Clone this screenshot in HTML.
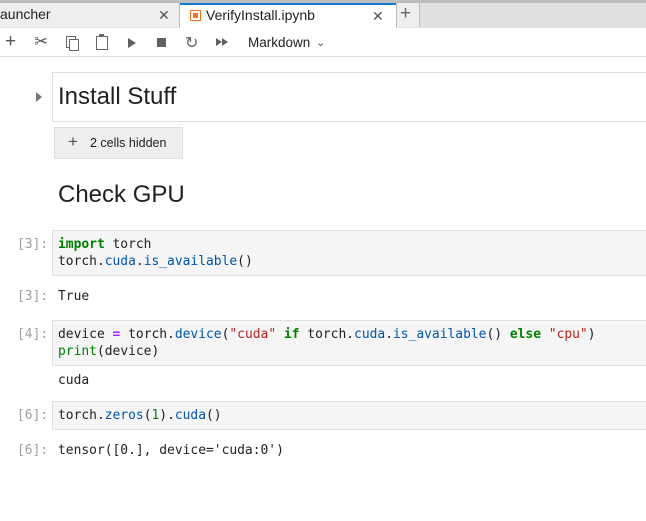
<!DOCTYPE html>
<html><head><style>
body{margin:0;width:646px;height:521px;overflow:hidden;background:#fff;font-family:"Liberation Sans",sans-serif;position:relative}
.a{position:absolute}
.mono{font-family:"DejaVu Sans Mono",monospace;font-size:12.95px;line-height:17px;color:#212121;white-space:pre}
.pr{color:#9e9e9e;left:17px}
.cell{left:52px;width:594px;background:#f5f5f5;border:1px solid #e0e0e0;border-right:none;box-sizing:border-box}
.k{color:#008000;font-weight:bold}.b{color:#0055aa}.s{color:#ba2121}.n{color:#008000}.o{color:#aa22ff;font-weight:bold}
</style></head><body>
<div class="a" style="left:0;top:0;width:646px;height:3px;background:#bdbdbd"></div>
<div class="a" style="left:0;top:3px;width:646px;height:25px;background:#e0e0e0"></div>
<div class="a" style="left:0;top:3px;width:179px;height:24px;background:#eeeeee;border-right:1px solid #bdbdbd"></div>
<div class="a" style="left:0;top:6px;font-size:14px;color:#212121">auncher</div>
<div class="a" style="left:158px;top:7px;font-size:14px;color:#555">✕</div>
<div class="a" style="left:180px;top:3px;width:216px;height:25px;background:#fff;border-top:2px solid #1976d2;box-sizing:border-box"></div>
<div class="a" style="left:190px;top:10px;width:9px;height:9px;border:1px solid #f37626;background:#fff"><div style="margin:2px;width:5px;height:5px;background:#f37626"></div></div>
<div class="a" style="left:206px;top:7px;font-size:14px;color:#212121">VerifyInstall.ipynb</div>
<div class="a" style="left:372px;top:8px;font-size:14px;color:#555">✕</div>
<div class="a" style="left:396px;top:3px;width:22px;height:24px;background:#eeeeee;border-left:1px solid #bdbdbd;border-right:1px solid #bdbdbd"></div>
<div class="a" style="left:400px;top:3px;font-size:19px;color:#666">+</div>
<div class="a" style="left:0;top:56px;width:646px;height:1px;background:#e0e0e0"></div>
<div class="a" style="left:5px;top:31px;font-size:19px;color:#555">+</div>
<div class="a" style="left:34px;top:32px;font-size:17px;color:#555">✂</div>
<div class="a" style="left:66px;top:36px;width:8px;height:10px;border:1.5px solid #666"></div>
<div class="a" style="left:69px;top:39px;width:8px;height:10px;border:1.5px solid #666;background:#fff"></div>
<div class="a" style="left:96px;top:36px;width:10px;height:12px;border:1.5px solid #666"></div>
<div class="a" style="left:99px;top:34px;width:5px;height:3px;background:#666"></div>
<div class="a" style="left:128px;top:38px;width:0;height:0;border-left:8px solid #616161;border-top:5px solid transparent;border-bottom:5px solid transparent"></div>
<div class="a" style="left:157px;top:38px;width:9px;height:9px;background:#616161"></div>
<div class="a" style="left:185px;top:33px;font-size:16px;color:#616161">↻</div>
<div class="a" style="left:216px;top:38px;border-left:6px solid #616161;border-top:4px solid transparent;border-bottom:4px solid transparent"></div>
<div class="a" style="left:222px;top:38px;border-left:6px solid #616161;border-top:4px solid transparent;border-bottom:4px solid transparent"></div>
<div class="a" style="left:248px;top:35px;font-size:13.5px;color:#212121">Markdown</div>
<div class="a" style="left:316px;top:36px;font-size:11px;color:#555">⌄</div>

<div class="a" style="left:36px;top:92px;border-left:6px solid #777;border-top:5px solid transparent;border-bottom:5px solid transparent"></div>
<div class="a" style="left:52px;top:72px;width:594px;height:50px;border:1px solid #e0e0e0;border-right:none;box-sizing:border-box"></div>
<div class="a" style="left:58px;top:83px;font-size:24px;color:#212121">Install Stuff</div>
<div class="a" style="left:54px;top:127px;width:129px;height:32px;background:#eeeeee;border:1px solid #e0e0e0;box-sizing:border-box"></div>
<div class="a" style="left:68px;top:132px;font-size:17px;color:#555">+</div>
<div class="a" style="left:90px;top:136px;font-size:12.5px;color:#212121">2 cells hidden</div>
<div class="a" style="left:58px;top:181px;font-size:24px;color:#212121">Check GPU</div>

<div class="a mono pr" style="top:236px">[3]:</div>
<div class="a cell" style="top:230px;height:46px"></div>
<div class="a mono" style="left:58px;top:236px"><span class="k">import</span> torch
torch.<span class="b">cuda</span>.<span class="b">is_available</span>()</div>
<div class="a mono pr" style="top:288px">[3]:</div>
<div class="a mono" style="left:58px;top:288px">True</div>

<div class="a mono pr" style="top:326px">[4]:</div>
<div class="a cell" style="top:320px;height:46px"></div>
<div class="a mono" style="left:58px;top:326px">device <span class="o">=</span> torch.<span class="b">device</span>(<span class="s">"cuda"</span> <span class="k">if</span> torch.<span class="b">cuda</span>.<span class="b">is_available</span>() <span class="k">else</span> <span class="s">"cpu"</span>)
<span class="n">print</span>(device)</div>
<div class="a mono" style="left:58px;top:372px">cuda</div>

<div class="a mono pr" style="top:407px">[6]:</div>
<div class="a cell" style="top:401px;height:29px"></div>
<div class="a mono" style="left:58px;top:407px">torch.<span class="b">zeros</span>(<span class="n">1</span>).<span class="b">cuda</span>()</div>
<div class="a mono pr" style="top:442px">[6]:</div>
<div class="a mono" style="left:58px;top:442px">tensor([0.], device='cuda:0')</div>
</body></html>
